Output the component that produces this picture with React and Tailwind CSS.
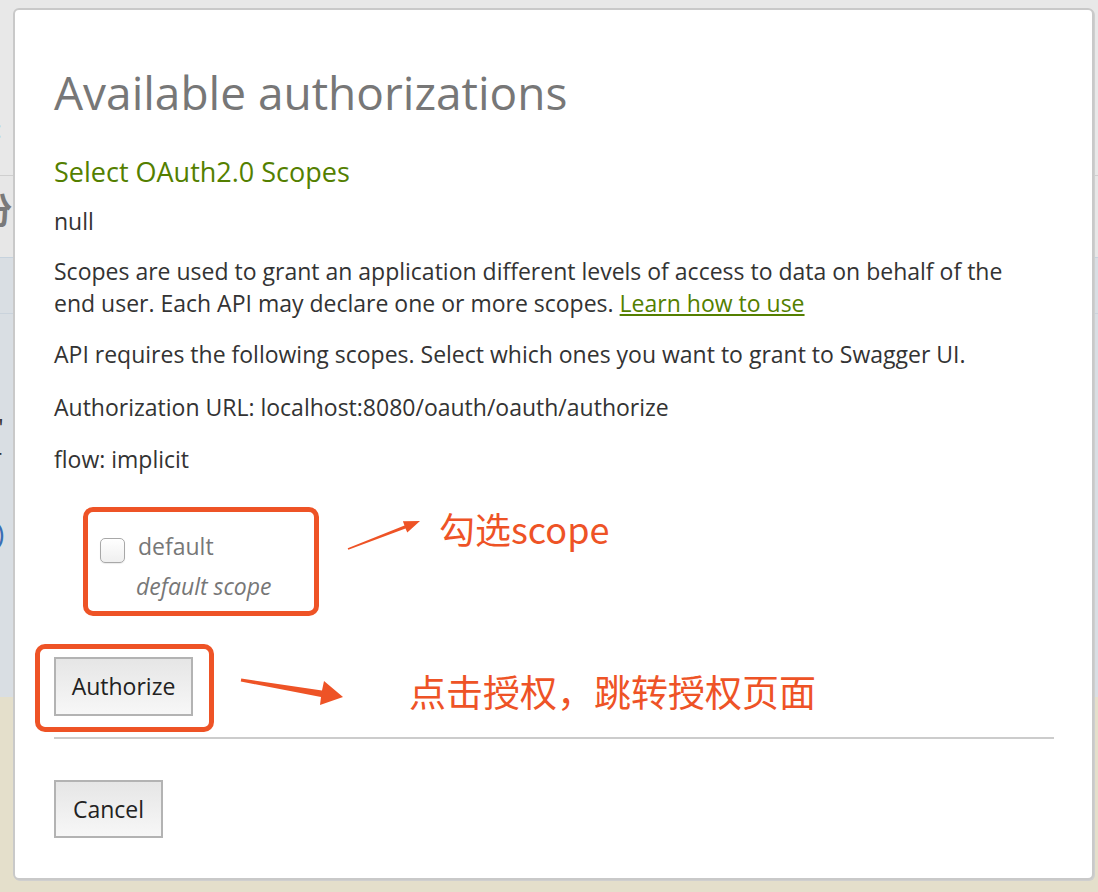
import React from "react";

const ORANGE = "#ee5326";

const ArrowSmall = () => (
  <svg width="80" height="36" viewBox="0 0 80 36" className="ml-[26px] mt-[10px] shrink-0">
    <polygon
      points="3.3,32.8 2.7,31.2 59.5,8.6 57.9,4.2 75,4 62.3,15.4 60.5,11.4"
      fill={ORANGE}
    />
  </svg>
);

const ArrowBig = () => (
  <svg width="110" height="40" viewBox="0 0 110 40" className="ml-[24px] mt-[28px] shrink-0">
    <polygon
      points="3.25,6.5 84,18.5 86,9 105,25 82,33 83,25 2.75,9.5"
      fill={ORANGE}
    />
  </svg>
);

export default function App() {
  return (
    <div className="relative w-[1098px] h-[892px] overflow-hidden font-['Open_Sans',sans-serif]">
      {/* page behind the modal */}
      <div className="h-[176px] bg-[#e8e8e8] border-b border-[#cfcfcf] pt-[116px]">
        <span className="block -ml-[6px] text-[26px] font-bold leading-none text-[#555]">:</span>
      </div>
      <div className="h-[82px] bg-[#e7e7e7] border-b border-[#c6d2dd] pt-[14px] flex justify-between">
        <span className="block -ml-[24px] text-[36px] font-bold leading-none text-[#7a7a7a] font-['Noto_Sans_CJK_SC',sans-serif]">份</span>
      </div>
      <div className="h-[56px] bg-[#d9dee3] border-b border-[#cad3dc]" />
      <div className="h-[383px] bg-[#d9dee3] pt-[98px] flex justify-between">
        <div className="flex flex-col -ml-[6px] text-[24px] leading-[30px] text-[#333]">
          <span>"</span>
          <span className="-ml-[2px]">r</span>
          <span className="mt-[46px] ml-[2px] text-[#3b6eb4] text-[28px]">)</span>
        </div>
        <span className="mt-[42px] -mr-[8px] text-[24px] font-bold text-[#333]">]</span>
      </div>
      <div className="h-[195px] bg-[#e4dfcb]" />

      {/* modal */}
      <div className="absolute left-[13px] top-[8px] w-[1081px] h-[872px] bg-white border-2 border-[#c9c9c9] rounded-[6px] shadow-[1px_1px_0_#cfcfcf] pl-[39px] pt-[54px]">
        <h2 className="text-[46px] leading-[56px] text-[#777]">Available authorizations</h2>
        <h3 className="mt-[36px] text-[27px] leading-[32px] text-[#547f00]">Select OAuth2.0 Scopes</h3>
        <div className="text-[23px] leading-[32px] text-[#333] max-w-[985px]">
          <p className="mt-[17px]">null</p>
          <p className="mt-[18px]">
            Scopes are used to grant an application different levels of access to data on behalf of the end user.
            Each API may declare one or more scopes.{" "}
            <span className="text-[#547f00] underline">Learn how to use</span>
          </p>
          <p className="mt-[19px]">
            API requires the following scopes. Select which ones you want to grant to Swagger UI.
          </p>
          <p className="mt-[21px]">Authorization URL: localhost:8080/oauth/oauth/authorize</p>
          <p className="mt-[20px]">flow: implicit</p>
        </div>

        {/* scope checkbox */}
        <div className="mt-[32px] flex items-start">
          <div className="ml-[29px] w-[236px] h-[109px] border-[5px] rounded-[10px] pl-[12px] pt-[18px] flex items-start" style={{ borderColor: ORANGE }}>
            <div className="mt-[8px] w-[25px] h-[25px] rounded-[5px] border border-[#a8a8a8] bg-linear-to-b from-white to-[#efefef] shadow-[0_1px_1px_rgba(0,0,0,0.08)] shrink-0" />
            <div className="ml-[13px] text-[23px] leading-[32px] text-[#777]">
              <div>default</div>
              <div className="mt-[8px] -ml-[2px] italic">default scope</div>
            </div>
          </div>
          <ArrowSmall />
          <span className="ml-[14px] mt-[3px] text-[36px] leading-[36px] font-['Noto_Sans_CJK_SC',sans-serif]" style={{ color: ORANGE }}>
            勾选scope
          </span>
        </div>

        {/* authorize */}
        <div className="mt-[28px] flex items-start">
          <div className="-ml-[19px] w-[179px] h-[88px] border-[5px] rounded-[10px] pl-[14px] pt-[8px]" style={{ borderColor: ORANGE }}>
            <button className="w-[139px] h-[59px] border-2 border-[#b3b3b3] bg-linear-to-b from-[#e6e6e6] to-[#f7f7f7] text-[23px] text-[#222]">
              Authorize
            </button>
          </div>
          <ArrowBig />
          <span className="ml-[61px] mt-[29px] text-[37px] leading-[37px] font-['Noto_Sans_CJK_SC',sans-serif]" style={{ color: ORANGE }}>
            点击授权，跳转授权页面
          </span>
        </div>

        <div className="mt-[5px] w-[1000px] h-[2px] bg-[#cccccc]" />

        <button className="mt-[41px] w-[109px] h-[58px] border-2 border-[#b3b3b3] bg-linear-to-b from-[#e6e6e6] to-[#f7f7f7] text-[23px] text-[#222]">
          Cancel
        </button>
      </div>
    </div>
  );
}
